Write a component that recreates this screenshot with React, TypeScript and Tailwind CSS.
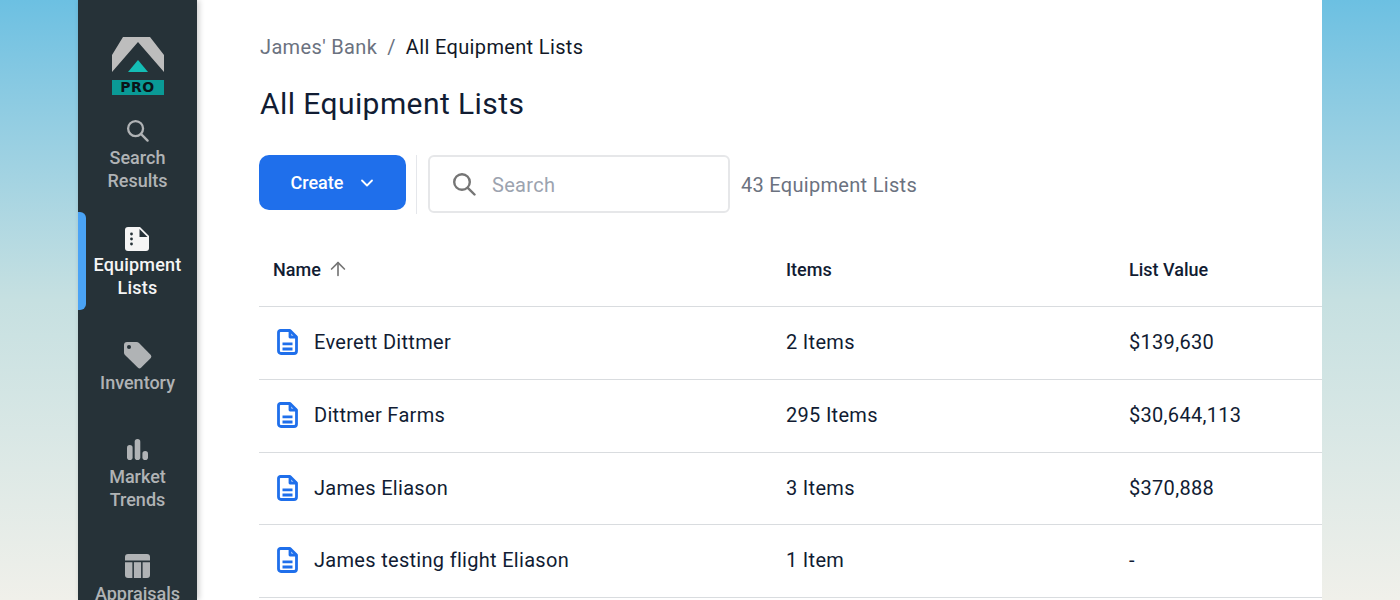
import { ChevronDown, ArrowUp } from "lucide-react";

const rows = [
  { name: "Everett Dittmer", items: "2 Items", value: "$139,630" },
  { name: "Dittmer Farms", items: "295 Items", value: "$30,644,113" },
  { name: "James Eliason", items: "3 Items", value: "$370,888" },
  { name: "James testing flight Eliason", items: "1 Item", value: "-" },
];

const Logo = () => (
  <div className="flex flex-col items-center">
    <svg width="52" height="43" viewBox="0 0 52 43">
      <path d="M11 0H38L52 18V35L26 5L0 35V18Z" fill="#bdbdbd" />
      <path d="M26 23L36 35H16Z" fill="#14bdb5" />
    </svg>
    <div
      className="w-[52px] h-[15px] bg-[#0a9a96] text-[#0b1418] text-[14px] leading-[15px] font-bold text-center tracking-[0.6px]"
      style={{ fontFamily: "'DejaVu Sans', sans-serif" }}
    >
      PRO
    </div>
  </div>
);

const SearchIcon = ({ size, color }: { size: number; color: string }) => (
  <svg width={size} height={size} viewBox="0 0 24 24" fill="none" stroke={color} strokeWidth="2.4" strokeLinecap="round">
    <circle cx="10" cy="10" r="7.8" />
    <path d="M15.8 15.8L22.5 22.5" />
  </svg>
);

const DocDots = () => (
  <svg width="24" height="24" viewBox="0 0 24 24">
    <path d="M3 0H15L24 9V21A3 3 0 0 1 21 24H3A3 3 0 0 1 0 21V3A3 3 0 0 1 3 0Z" fill="#f5f5f5" />
    <path d="M14.5 2V10H22.5Z" fill="#263238" />
    <circle cx="6.5" cy="7" r="1.4" fill="#263238" />
    <circle cx="6.5" cy="12" r="1.4" fill="#263238" />
    <circle cx="6.5" cy="17" r="1.4" fill="#263238" />
  </svg>
);

const TagIcon = () => (
  <svg width="28" height="27" viewBox="0 0 28 27">
    <path d="M3 0H12.5Q14 0 15 1L26.8 13Q28 14.5 26.8 16L17 25.8Q15.5 27 14 25.8L1 13Q0 12 0 10.5V3A3 3 0 0 1 3 0Z" fill="#b0b3b5" />
    <circle cx="5" cy="5" r="2" fill="#263238" />
  </svg>
);

const BarsIcon = () => (
  <svg width="21" height="21" viewBox="0 0 21 21" fill="#b0b3b5">
    <rect x="0" y="6" width="5.6" height="15" rx="2.8" />
    <rect x="7.7" y="0" width="5.6" height="21" rx="2.8" />
    <rect x="15.4" y="12" width="5.6" height="9" rx="2.8" />
  </svg>
);

const TableIcon = () => (
  <svg width="25" height="24" viewBox="0 0 25 24" fill="#b0b3b5">
    <path d="M3 0H22A3 3 0 0 1 25 3V6.5H0V3A3 3 0 0 1 3 0Z" />
    <path d="M0 8.2H7.4V24H3A3 3 0 0 1 0 21Z" />
    <rect x="8.9" y="8.2" width="7.2" height="15.8" />
    <path d="M17.6 8.2H25V21A3 3 0 0 1 22 24H17.6Z" />
  </svg>
);

const FileIcon = () => (
  <svg width="21" height="26" viewBox="0 0 21 26" fill="none" stroke="#1f6feb" strokeWidth="2.8" strokeLinejoin="round" strokeLinecap="butt">
    <path d="M3.5 1.5H13L19.5 8V22A2.5 2.5 0 0 1 17 24.5H4A2.5 2.5 0 0 1 1.5 22V3.5A2 2 0 0 1 3.5 1.5Z" />
    <path d="M13 1.5V8H19.5" />
    <path d="M5.5 14.8H15.5M5.5 20H15.5" />
  </svg>
);

const NavItem = ({
  icon,
  label,
  active,
  className,
}: {
  icon: React.ReactNode;
  label: string[];
  active?: boolean;
  className?: string;
}) => (
  <div className={`flex flex-col items-center ${className}`}>
    <div className="h-[26px] flex items-center justify-center">{icon}</div>
    <div
      className={`text-[18px] leading-[23px] text-center font-medium ${
        active ? "mt-[1px] mb-[2px] tracking-[0.2px] text-[#f5f5f5]" : "mt-[3px] text-[#b0b3b5]"
      }`}
    >
      {label.map((l) => (
        <div key={l}>{l}</div>
      ))}
    </div>
  </div>
);

export default function App() {
  return (
    <div
      className="h-[600px] overflow-hidden flex px-[78px] bg-gradient-to-b from-[#6cc0e2] via-[#c6e0e1] to-[#f0f0ea]"
      style={{ fontFamily: "Roboto, sans-serif" }}
    >
      <aside className="relative w-[119px] shrink-0 bg-[#263238] flex flex-col items-center pt-[37px] z-10 shadow-[2px_0_6px_rgba(0,0,0,0.2)]">
        <div className="absolute left-0 top-[212px] w-[8px] h-[98px] rounded-r-[6px] bg-[#4aa3f5]" />
        <Logo />
        <NavItem className="mt-[22px]" icon={<SearchIcon size={23} color="#b0b3b5" />} label={["Search", "Results"]} />
        <NavItem className="mt-[34px]" active icon={<DocDots />} label={["Equipment", "Lists"]} />
        <NavItem className="mt-[41px]" icon={<TagIcon />} label={["Inventory"]} />
        <NavItem className="mt-[42px]" icon={<BarsIcon />} label={["Market", "Trends"]} />
        <NavItem className="mt-[42px]" icon={<TableIcon />} label={["Appraisals"]} />
      </aside>

      <main className="flex-1 min-w-0 bg-white pl-[62px] overflow-hidden">
        <div className="pt-[34px] pl-px flex items-center text-[20px] leading-[26px] tracking-[0.35px]">
          <span className="text-[#6b7280]">James' Bank</span>
          <span className="text-[#6b7280] mx-[10px]">/</span>
          <span className="text-[#111827]">All Equipment Lists</span>
        </div>
        <h1 className="mt-[24px] pl-px text-[30px] leading-[40px] tracking-[0.42px] text-[#111c33]">All Equipment Lists</h1>

        <div className="mt-[31px] flex items-start">
          <button className="w-[147px] h-[55px] pl-[3px] rounded-[10px] bg-[#1f6feb] text-white text-[18px] font-medium flex items-center justify-center gap-[14px]">
            Create
            <ChevronDown size={20} strokeWidth={2.2} />
          </button>
          <div className="ml-[10px] w-[1px] h-[59px] bg-[#e5e7eb]" />
          <div className="ml-[11px] w-[302px] h-[58px] rounded-[6px] border-2 border-[#e6e7e9] flex items-center pl-[22px]">
            <SearchIcon size={24} color="#757575" />
            <span className="ml-[16px] mt-[2px] text-[20px] tracking-[0.3px] text-[#9ca3af]">Search</span>
          </div>
          <span className="ml-[11px] mt-[15px] text-[20px] tracking-[0.3px] text-[#6b7280]">43 Equipment Lists</span>
        </div>

        <div className="mt-[20px] w-[1100px]">
          <div className="h-[73px] pb-[2px] flex items-center border-b border-[#d9dcdf] text-[18px] font-medium text-[#111c33]">
            <div className="w-[527px] pl-[14px] flex items-center gap-[6px]">
              Name
              <ArrowUp size={22} color="#757575" strokeWidth={1.8} />
            </div>
            <div className="w-[343px]">Items</div>
            <div>List Value</div>
          </div>
          {rows.map((r) => (
            <div key={r.name} className="h-[72.75px] pb-[1.5px] flex items-center border-b border-[#d9dcdf] text-[20px] tracking-[0.3px] text-[#111c33]">
              <div className="w-[527px] pl-[18px] flex items-center gap-[16px]">
                <FileIcon />
                {r.name}
              </div>
              <div className="w-[343px]">{r.items}</div>
              <div>{r.value}</div>
            </div>
          ))}
        </div>
      </main>
    </div>
  );
}
